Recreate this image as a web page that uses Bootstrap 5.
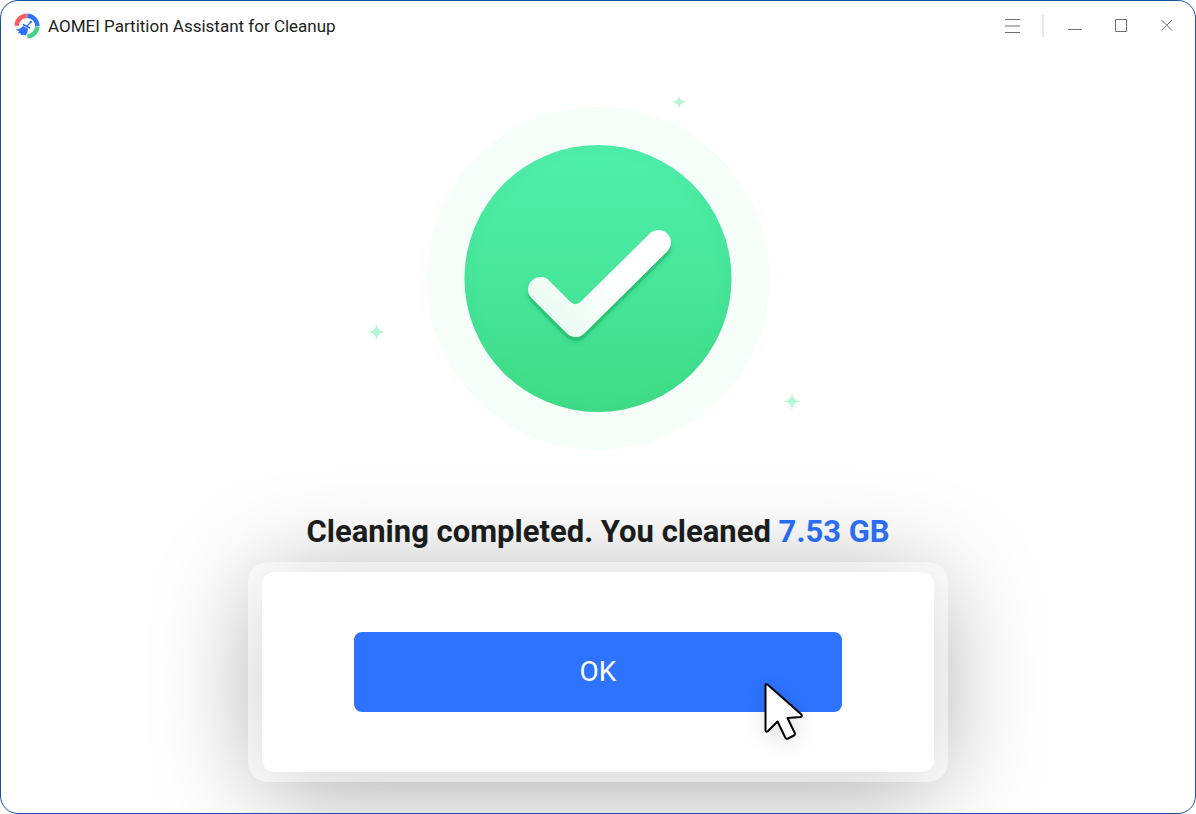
<!DOCTYPE html>
<html lang="en">
<head>
<meta charset="utf-8">
<meta name="viewport" content="width=device-width, initial-scale=1">
<title>AOMEI Partition Assistant for Cleanup</title>
<link href="https://cdn.jsdelivr.net/npm/bootstrap@5.3.0/dist/css/bootstrap.min.css" rel="stylesheet">
<style>
  body { font-family: Roboto, "Liberation Sans", sans-serif; color: #1c1f20; background: #fff; }
  .app-window { min-height: 100vh; border: 1px solid #1b4f9f; border-radius: 18px; background: #fff; }
  .title-bar { height: 50px; padding: 0 5px 0 13px; }
  .app-name { font-size: 17px; line-height: 24px; }
  .win-btn { width: 46px; height: 40px; padding: 0; border: 0; border-radius: 4px; display: flex; align-items: center; justify-content: center; }
  .menu-btn { width: 32px; }
  .divider { width: 2px; height: 22px; background: #e8e8e8; margin: 0 8px 0 14px; }
  .hero { width: 471px; max-width: 100%; height: auto; margin-top: 38px; }
  .result { font-size: 31px; line-height: 40px; font-weight: 700; margin: 57px 0 10px; }
  .amount { color: #2d73ff; }
  .action { width: 700px; max-width: 100%; isolation: isolate; }
  .action::before { content: ""; position: absolute; inset: 10px 14px; border-radius: 12px; background: #d4d4d4; box-shadow: 0 12px 104px rgba(0, 0, 0, .38); z-index: -1; }
  .action-ring { padding: 10px 14px; border-radius: 20px; background: rgba(255, 255, 255, .5); }
  .action-panel { padding: 60px 92px; border-radius: 12px; background: #fff; }
  .ok-btn { height: 80px; border: 0; border-radius: 8px; font-size: 28px; line-height: 40px; padding: 0; --bs-btn-bg: #2d73ff; --bs-btn-hover-bg: #2467ee; --bs-btn-active-bg: #1d5cdd; }
  .pointer { position: absolute; right: 135px; bottom: 32px; pointer-events: none; overflow: visible; filter: drop-shadow(0 6px 10px rgba(0, 0, 0, .12)); }
</style>
</head>
<body>
<div class="app-window d-flex flex-column overflow-hidden">
  <header class="title-bar d-flex align-items-center justify-content-between">
    <div class="d-flex align-items-center gap-2">
      <svg width="26" height="26" viewBox="0 0 26 26" aria-hidden="true">
        <g fill="none" stroke-width="4.500">
          <path d="M2.700 12.800A10.300 10.300 0 0 1 12.800 2.700" stroke="#ff5a5f"/>
          <path d="M13.200 2.700A10.300 10.300 0 0 1 23.300 13" stroke="#2d73ff"/>
          <path d="M23.300 13.400A10.300 10.300 0 0 1 13.400 23.300" stroke="#46d08a"/>
        </g>
        <path d="M17 9L12.500 13.500" stroke="#2d73ff" stroke-width="1.300" stroke-linecap="round"/>
        <circle cx="16.800" cy="9" r="1.200" fill="#2d73ff"/>
        <path d="M9.500 11.800L15.500 14.800" stroke="#2d73ff" stroke-width="1.800" stroke-linecap="round"/>
        <path d="M9 13L14 15.500Q14 20 11.500 22.500L9 21.800L7.500 22.300L6.500 20.500L4 20L5 18.200L1.500 16.500Q6.500 16.500 9 13Z" fill="#2d73ff"/>
      </svg>
      <span class="app-name">AOMEI Partition Assistant for Cleanup</span>
    </div>
    <div class="d-flex align-items-center">
      <button class="btn win-btn menu-btn" type="button" aria-label="Menu">
        <svg width="16" height="16" viewBox="0 0 16 16" stroke="#6e6e6e"><path d="M1 1.500H16M1 8H16M1 14.500H16"/></svg>
      </button>
      <span class="divider"></span>
      <button class="btn win-btn" type="button" aria-label="Minimize">
        <svg width="14" height="14" viewBox="0 0 14 14" stroke="#6e6e6e"><path d="M0 10.500H14"/></svg>
      </button>
      <button class="btn win-btn" type="button" aria-label="Maximize">
        <svg width="14" height="14" viewBox="0 0 14 14" fill="none" stroke="#6e6e6e"><path d="M1.500 .5H12.500V12.500H1.500Z"/></svg>
      </button>
      <button class="btn win-btn" type="button" aria-label="Close">
        <svg width="14" height="14" viewBox="0 0 14 14" stroke="#6e6e6e"><path d="M1.500 1L12 11.500M12 1L1.500 11.500"/></svg>
      </button>
    </div>
  </header>

  <main class="flex-grow-1 d-flex flex-column align-items-center px-3 pb-4">
    <svg class="hero" width="471" height="366" viewBox="363 89 471 366" role="img" aria-label="Completed">
      <defs>
        <linearGradient id="disc" x1="0" y1="0" x2="0" y2="1"><stop offset="0" stop-color="#50f0ae"/><stop offset="1" stop-color="#3edc86"/></linearGradient>
        <linearGradient id="tick" x1="560" y1="330" x2="610" y2="270" gradientUnits="userSpaceOnUse"><stop offset="0" stop-color="#eafbf2"/><stop offset="1" stop-color="#fff"/></linearGradient>
        <radialGradient id="rim"><stop offset=".88" stop-color="#35cf80" stop-opacity="0"/><stop offset="1" stop-color="#35cf80" stop-opacity=".14"/></radialGradient>
        <filter id="soft" x="-20%" y="-20%" width="140%" height="150%"><feGaussianBlur stdDeviation="2"/></filter>
        <path id="spark" d="M0-9Q.8-2.800 2.800-2.800Q2.800-.8 9 0Q2.800.8 2.800 2.800Q.8 2.800 0 9Q-.8 2.800-2.800 2.800Q-2.800.8-9 0Q-2.800-.8-2.800-2.800Q-.8-2.800 0-9Z"/>
      </defs>
      <circle cx="598" cy="278.500" r="171.500" fill="#f5fef9"/>
      <circle cx="598" cy="278.500" r="133.500" fill="url(#disc)"/>
      <circle cx="598" cy="278.500" r="133.500" fill="url(#rim)"/>
      <g fill="none" stroke="#20b568" stroke-width="25" stroke-linecap="round" stroke-linejoin="round">
        <path d="M540.500 294.500L575.500 329.500L658.500 247.500" opacity=".5" filter="url(#soft)"/>
        <path d="M540.500 293.500L575.500 328.500L658.500 246.500" opacity=".5"/>
      </g>
      <path d="M540.500 289.500L575.500 324.500L658.500 242.500" fill="none" stroke="url(#tick)" stroke-width="25" stroke-linecap="round" stroke-linejoin="round"/>
      <path d="M565 296.500L571.500 302.500Q575.500 306 579.500 302.500L586 296.500L586 312L565 312Z" fill="#f2fcf7" clip-path="inset(6px 0 0 0)"/>
      <g fill="#b4f5d6">
        <use href="#spark" transform="translate(679 102) scale(.8)"/>
        <use href="#spark" transform="translate(376.500 332)"/>
        <use href="#spark" transform="translate(792 401.500)"/>
      </g>
    </svg>

    <h1 class="result text-center">Cleaning completed. You cleaned <span class="amount">7.53 GB</span></h1>

    <div class="action position-relative">
      <div class="action-ring">
        <div class="action-panel">
          <button class="btn btn-primary ok-btn w-100" type="button">OK</button>
        </div>
      </div>
      <svg class="pointer" width="60" height="70" viewBox="754 680 60 70" aria-hidden="true">
        <path d="M766.500 685.500Q766.500 683.500 768.500 684.500L802.500 714.500Q803.500 716.500 801.500 717L788.500 718L796 733.500Q796 735 795 735.500L789 738.500Q787 739 786.500 738L778.500 721.500L769 731Q767 732.500 766.500 730.500Z" fill="#fff" stroke="#000" stroke-width="2" stroke-linejoin="round"/>
      </svg>
    </div>
  </main>
</div>
<script src="https://cdn.jsdelivr.net/npm/bootstrap@5.3.0/dist/js/bootstrap.bundle.min.js"></script>
</body>
</html>
